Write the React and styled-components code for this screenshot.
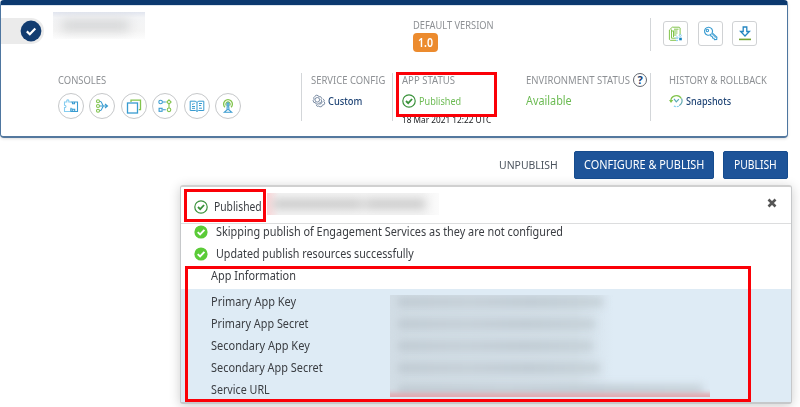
import React, { useLayoutEffect, useRef, useState } from "react";
import styled, { createGlobalStyle } from "styled-components";

const Global = createGlobalStyle`
  * { box-sizing: border-box; }
  body { margin: 0; background: #fff; overflow: hidden; font-family: "Noto Sans", "Open Sans", sans-serif; }
`;

/* Text set to a fixed measure, standing in for a condensed humanist face. */
const Measure = styled.span`
  display: block;
  flex: none;
  width: ${(p) => p.$w}px;
  height: ${(p) => p.$h}px;
  line-height: ${(p) => p.$h}px;
  font-size: ${(p) => p.$size}px;
  font-weight: ${(p) => p.$weight};
  color: ${(p) => p.$color};
  white-space: nowrap;
`;
const Glyphs = styled.span`
  display: inline-block;
  transform-origin: 0 50%;
`;
function Text({ w, h = 16, size = 12, weight = 400, color = "#3a3d42", children }) {
  const ref = useRef(null);
  const [scale, setScale] = useState(1);
  useLayoutEffect(() => {
    setScale(w / ref.current.offsetWidth);
  }, [w, size]);
  return (
    <Measure $w={w} $h={h} $size={size} $weight={weight} $color={color}>
      <Glyphs ref={ref} style={{ transform: `scaleX(${scale})` }}>{children}</Glyphs>
    </Measure>
  );
}
const Label = ({ w, children }) => <Text w={w} size={11} color="#8d9094">{children}</Text>;

const Page = styled.main`
  position: relative;
  width: 800px;
  height: 407px;
  overflow: hidden;
`;
const Card = styled.section`
  width: 788px;
  height: 138px;
  border: 1px solid #4e76a0;
  border-top: 5px solid #0b396f;
  border-bottom: 2px solid #54789e;
  border-radius: 4px;
  box-shadow: 0 1px 3px #0002, inset 0 1px 0 #dbe4ed;
`;
const Summary = styled.div`
  display: flex;
  height: 68px;
`;
const Toggle = styled.div`
  display: flex;
  align-items: center;
  justify-content: flex-end;
  width: 43px;
  height: 26px;
  margin-top: 13px;
  padding-right: 2px;
  border-radius: 0 13px 13px 0;
  background: #ebebeb;
`;
const AppName = styled.div`
  position: relative;
  width: 92px;
  height: 27px;
  margin: 7px 0 0 9px;
  overflow: hidden;
  background: linear-gradient(#e1e5ef, #f3f4f6 20%, #f5f5f5 70%, #fdfdfd);
  &::after {
    content: "";
    position: absolute;
    inset: 9px 16px 9px 9px;
    background: #cbcccd;
    filter: blur(6px);
  }
`;
const Version = styled.div`
  width: 237px;
  margin: 12px 0 0 268px;
`;
const VersionBadge = styled.div`
  display: flex;
  justify-content: center;
  align-items: center;
  width: 25px;
  height: 19px;
  border-radius: 4px;
  background: #ec8b2e;
`;
const Actions = styled.div`
  display: flex;
  gap: 9.5px;
  height: 33px;
  margin-top: 13px;
  padding: 3px 0 0 12px;
  border-left: 1px solid #d3d6d9;
`;
const ActionButton = styled.button`
  display: grid;
  place-items: center;
  width: 25px;
  height: 25px;
  padding: 0;
  border: 1px solid #d0d2d4;
  border-radius: 3px;
  background: #fff;
`;
const Details = styled.div`
  display: grid;
  grid-template-columns: 300px 91px 124px 134px 1fr;
  grid-template-rows: 48px;
  height: 48px;
`;
const Column = styled.div`
  padding-left: ${(p) => p.$pad}px;
  border-left: ${(p) => (p.$line ? "1px solid #d3d6d9" : "0")};
`;
const Heading = styled.div`
  display: flex;
  align-items: center;
  gap: 3px;
  height: 14px;
`;
const Value = styled.div`
  display: flex;
  align-items: center;
  gap: ${(p) => p.$gap || 2}px;
  height: 16px;
  margin-top: 6px;
`;
const Timestamp = styled.div`
  height: 14px;
  margin-top: 4px;
`;
const Consoles = styled.div`
  display: flex;
  gap: 5.4px;
  margin-top: 6px;
`;
const ConsoleButton = styled.button`
  display: grid;
  flex: none;
  place-items: center;
  width: 26px;
  height: 26px;
  padding: 0;
  border: 1px solid #c6c8ca;
  border-radius: 50%;
  background: #fff;
`;
const Toolbar = styled.div`
  display: flex;
  align-items: center;
  justify-content: flex-end;
  width: 788px;
  height: 27px;
  margin-top: 13px;
`;
const PublishButton = styled.button`
  display: flex;
  align-items: center;
  justify-content: center;
  width: ${(p) => p.$w}px;
  height: 28px;
  margin-left: ${(p) => p.$gap}px;
  padding: 0;
  border: 1px solid #164c8e;
  border-radius: 2px;
  background: #1e5499;
  font-family: inherit;
`;
const Panel = styled.section`
  width: 612px;
  height: 219px;
  margin: 7px 0 0 180px;
  border: 1px solid #c6c8ca;
  border-top: 2px solid #d0d0d0;
  border-bottom-width: 2px;
  border-radius: 3px;
  background: #fff;
  box-shadow: 0 2px 12px #0003;
`;
const PanelHeader = styled.header`
  display: flex;
  height: 37px;
  padding-left: 13px;
  border-bottom: 1px solid #dcddde;
`;
const PanelTitle = styled.div`
  display: flex;
  align-items: center;
  gap: 6px;
  height: 20px;
  margin-top: 10px;
`;
const RedactedTitle = styled.div`
  position: relative;
  width: 172px;
  height: 22px;
  margin: 6px 0 0 5px;
  overflow: hidden;
  background: linear-gradient(90deg, #fbd5d7, #f3f3f3 7%, #f4f4f4 90%, #fbfbfb);
  &::after {
    content: "";
    position: absolute;
    inset: 7px 14px 7px 6px;
    background: linear-gradient(90deg, #c2c2c2 55%, #d6d6d6 59%, #c2c2c2 65%);
    filter: blur(5px);
  }
`;
const CloseButton = styled.button`
  width: 12px;
  height: 12px;
  margin: 10px 13px 0 auto;
  padding: 0;
  border: 0;
  background: none;
  line-height: 0;
`;
const Message = styled.div`
  display: flex;
  align-items: center;
  gap: 8px;
  height: 22px;
  padding-left: 13px;
  transform: translateY(-3px);
`;
const SectionTitle = styled.div`
  height: 21px;
  padding-left: 29.5px;
`;
const Info = styled.div`
  display: grid;
  grid-template-columns: 182px 320px;
  height: 113px;
  padding: 6px 0 0 29.5px;
  background: #deebf5;
`;
const Keys = styled.div`
  display: grid;
  grid-auto-rows: 21.9px;
  line-height: 0;
`;
const HiddenValues = styled.div`
  position: relative;
  display: flex;
  flex-direction: column;
  gap: 12px;
  width: 320px;
  height: 102px;
  padding: 2px 0 0 8px;
  margin-left: -3px;
  overflow: hidden;
  background: linear-gradient(90deg, #d2dde5, #d4e0e8 58%, #deebf5 70%);
  &::after {
    content: "";
    position: absolute;
    inset: 98px -10px -6px -8px;
    background: #e2a9b0;
    filter: blur(2px);
  }
`;
const HiddenValue = styled.div`
  flex: none;
  width: ${(p) => p.$w}px;
  height: 10px;
  background: linear-gradient(90deg, #bec9d1, #c4ced6 35%, #bec9d1 65%, #c5d0d7);
  filter: blur(4.5px);
`;
const Highlight = styled.div`
  position: absolute;
  left: ${(p) => p.$x}px;
  top: ${(p) => p.$y}px;
  width: ${(p) => p.$w}px;
  height: ${(p) => p.$h}px;
  border: ${(p) => p.$t || 3}px solid #fb0007;
  pointer-events: none;
`;
const Svg = styled.svg`
  display: block;
  flex: none;
  fill: none;
  stroke: ${(p) => p.$c || "#389bd0"};
  stroke-width: ${(p) => p.$sw || 1.1};
`;

const B = "#389bd0";
const G = "#82c44c";

const Done = () => (
  <Svg width="22" height="22" viewBox="0 0 22 22" $c="#fff">
    <circle cx="11" cy="11" r="10.4" fill="#123c70" stroke="none" />
    <path d="M6.8 11.4l3 2.8 5.5-5.6" strokeWidth="2.2" />
  </Svg>
);
const CheckRing = () => (
  <Svg width="14" height="14" viewBox="0 0 14 14" $c="#39913a">
    <circle cx="7" cy="7" r="6.2" strokeWidth="1.2" />
    <path d="M4 7l2.2 2.2L10.1 5" strokeWidth="1.8" />
  </Svg>
);
const CheckSolid = () => (
  <Svg width="14" height="14" viewBox="0 0 14 14" $c="#fff">
    <circle cx="7" cy="7" r="6.6" fill="#5bcb38" stroke="none" />
    <path d="M3.7 7.1l2.4 2.3 4.3-4.5" strokeWidth="1.9" />
  </Svg>
);
const Gear = () => (
  <Svg width="15" height="15" viewBox="0 0 15 15" $c="#6e819b" $sw="0.9">
    <path d="M5.2 1.2l2 .4.7 1.2 1.8-.1 1.1 1.7-.8 1.3.7 1.3-.9 1.8-1.5.1-1 1.3-2.1-.2-.7-1.3-1.7-.3-.7-1.9 1-1.2-.4-1.6 1.2-1.4z" />
    <circle cx="6.3" cy="5.8" r="2.3" />
    <path d="M12 5l1.3 1.1-.4 1.6 1 1.3-.8 1.7-1.6.2-.7 1.6-1.9.4-1-.9-1.6.4-1.2-1.5" />
    <path d="M8.2 10.2l2-.5 1.2-2" />
  </Svg>
);
const Help = styled.span`
  display: grid;
  place-items: center;
  width: 14px;
  height: 14px;
  border: 1px solid #62676f;
  border-radius: 50%;
  color: #173f72;
  font-size: 11px;
  font-weight: 700;
  line-height: 12px;
`;
const History = () => (
  <Svg width="14" height="14" viewBox="0 0 14 14" $c={G} $sw="1.2">
    <path d="M1.8 7.5a5.6 5.6 0 0 1 10.5-3" />
    <path d="M0 6.1h4.3L2 8.9z" fill={G} stroke="none" />
    <path d="M12.5 4.5c1.5 3-.2 6-2.3 7" stroke="#65a9b2" />
    <path d="M9.8 12.2c-2 .8-4 .5-5.3-.4" stroke="#81cdef" strokeDasharray="2 1" />
    <path d="M5 4.8l2.3 3 2.6-2.6" stroke="#58aab5" />
  </Svg>
);
const Puzzle = () => (
  <Svg width="16" height="14" viewBox="0 0 16 14" $c="#86cdf0">
    <path d="M7.5 3H5.8V1.5C5.5.6 4.1.6 3.8 1.5V3H1.5v3.2c2 0 2 2.4 0 2.4v3.9h6.2v-2c.3-1 1.7-1 2 0" />
    <path d="M7.5 3h7v9.5H8V8.8M9.5 3.2v1.6h2V3.2M9.7 12.3v-2h2v2" stroke={B} />
  </Svg>
);
const Merge = () => (
  <Svg width="14" height="14" viewBox="0 0 14 14" $c={G}>
    <circle cx="3" cy="2.3" r="1.5" /><circle cx="3" cy="7" r="1.5" /><circle cx="3" cy="11.7" r="1.5" />
    <path d="M4.8 7H12M10 5l2.5 2L10 9" stroke={B} />
    <path d="M4.8 2.3c3 0 1.6 3.7 3.7 4.3M4.8 11.7c3 0 1.6-3.7 3.7-4.3" stroke={B} />
  </Svg>
);
const Layers = () => (
  <Svg width="16" height="15" viewBox="0 0 16 15">
    <rect x="1.5" y="4" width="10" height="10" strokeWidth="1.3" />
    <path d="M5 2.9V1.2h9.5v9.5h-1.7" stroke={G} strokeWidth="1.3" />
  </Svg>
);
const Flow = () => (
  <Svg width="14" height="14" viewBox="0 0 14 14">
    <circle cx="2.6" cy="3" r="1.8" />
    <rect x="1.1" y="9.3" width="3" height="3" />
    <path d="M4.8 3h3M4.8 10.8h3" />
    <path d="M11 .8L13.1 3 11 5.2 8.8 3z" stroke={G} />
    <circle cx="11" cy="10.8" r="1.8" stroke={G} />
    <path d="M11 5.4V9" stroke={G} />
  </Svg>
);
const Book = () => (
  <Svg width="16" height="14" viewBox="0 0 16 14" $sw="1">
    <path d="M1.2 2.2h5L8 3.4l1.8-1.2h5v9.3H9.5L8 12.4l-1.5-.9H1.2zM8 3.5v8.8" />
    <path d="M3 4.8l1 .8 1.6-1.7M3 7.5h3M3 9.3h3M10 4.5h3M10 6.5h2.2M10 9.2h3" />
  </Svg>
);
const Antenna = () => (
  <Svg width="14" height="15" viewBox="0 0 14 15" $c={G}>
    <path d="M4 8.3a4.4 4.4 0 1 1 6 0" strokeWidth="1.3" />
    <path d="M5.5 6.7a2.2 2.2 0 1 1 3 0" />
    <circle cx="7" cy="5" r="1.1" stroke={B} />
    <path d="M6.3 6.3L6 10.8l-2.7 2.5h7.4L8 10.8l-.4-4.5M6 10.8h2" stroke={B} />
  </Svg>
);
const Copies = () => (
  <Svg width="15" height="16" viewBox="0 0 15 16" $c={G} $sw="1">
    <path d="M4.3 1.2h7l.8.8v7M6 3.2h4.5M4.3 1.2L1.4 4v9.5l1 .8h5.8M3.5 3.5v8.7h4.3M3.5 5h6M5.5 7h4M5.5 9h3M5.5 5v6" />
    <circle cx="9" cy="11.8" r="1" stroke="#8bcff0" /><circle cx="12.3" cy="9.5" r="1" stroke="#8bcff0" />
    <rect x="11.2" y="11.7" width="2.6" height="2.6" fill="#1583bf" stroke="none" />
    <path d="M8 14.6h2" stroke="#8bcff0" />
  </Svg>
);
const KeyIcon = () => (
  <Svg width="15" height="15" viewBox="0 0 15 15">
    <path d="M7.8 8.5a4 4 0 1 1 1.4-1.7l4.7 4.5-.2 2.2-2.2.1-.6-1.4-1.3-.1-.2-1.3-1.6-.8z" />
    <circle cx="4.4" cy="4.5" r="1.2" />
    <path d="M8 7.2l4.7 4.7" strokeWidth="0.8" />
  </Svg>
);
const Download = () => (
  <Svg width="14" height="15" viewBox="0 0 14 15" $c="#2586c2">
    <path d="M5.2 1h3.6v4.5h2.6L7 10 2.6 5.5h2.6z" strokeWidth="1.3" />
    <path d="M1 13.4h12" stroke="#73a333" strokeWidth="1.6" />
  </Svg>
);

const consoleIcons = [Puzzle, Merge, Layers, Flow, Book, Antenna];
const actionIcons = [Copies, KeyIcon, Download];
const keys = [
  ["Primary App Key", 85],
  ["Primary App Secret", 97.5],
  ["Secondary App Key", 99],
  ["Secondary App Secret", 112],
  ["Service URL", 59],
];

export default function App() {
  return (
    <Page>
      <Global />
      <Card>
        <Summary>
          <Toggle><Done /></Toggle>
          <AppName />
          <Version>
            <Label w={81}>DEFAULT VERSION</Label>
            <VersionBadge><Text w={15} size={12} weight={600} color="#fff">1.0</Text></VersionBadge>
          </Version>
          <Actions>
            {actionIcons.map((Icon, i) => <ActionButton key={i}><Icon /></ActionButton>)}
          </Actions>
        </Summary>
        <Details>
          <Column $pad={57}>
            <Heading><Label w={48}>CONSOLES</Label></Heading>
            <Consoles>
              {consoleIcons.map((Icon, i) => <ConsoleButton key={i}><Icon /></ConsoleButton>)}
            </Consoles>
          </Column>
          <Column $pad={9} $line>
            <Heading><Label w={74}>SERVICE CONFIG</Label></Heading>
            <Value $gap={2}><Gear /><Text w={34} size={11.5} weight={500} color="#1f4475">Custom</Text></Value>
          </Column>
          <Column $pad={9} $line>
            <Heading><Label w={53}>APP STATUS</Label></Heading>
            <Value $gap={3}><CheckRing /><Text w={42} size={11.5} color="#6cbb53">Published</Text></Value>
            <Timestamp><Text w={89} h={13} size={9} color="#17191c">18 Mar 2021 12:22 UTC</Text></Timestamp>
          </Column>
          <Column $pad={10}>
            <Heading><Label w={104}>ENVIRONMENT STATUS</Label><Help>?</Help></Heading>
            <Value><Text w={46} color="#6cbb53">Available</Text></Value>
          </Column>
          <Column $pad={18} $line>
            <Heading><Label w={98}>HISTORY &amp; ROLLBACK</Label></Heading>
            <Value $gap={3}><History /><Text w={45} size={11.5} weight={500} color="#1f4475">Snapshots</Text></Value>
          </Column>
        </Details>
      </Card>
      <Toolbar>
        <Text w={59} size={11.5} color="#4c545e">UNPUBLISH</Text>
        <PublishButton $w={140} $gap={16}><Text w={120} size={12} color="#fff">CONFIGURE &amp; PUBLISH</Text></PublishButton>
        <PublishButton $w={65} $gap={9}><Text w={43} size={12} color="#fff">PUBLISH</Text></PublishButton>
      </Toolbar>
      <Panel>
        <PanelHeader>
          <PanelTitle><CheckRing /><Text w={48}>Published</Text></PanelTitle>
          <RedactedTitle />
          <CloseButton aria-label="Close">
            <Svg width="12" height="12" viewBox="0 0 12 12" $c="#555" $sw="2.6"><path d="M2.5 2.5l7 7M9.5 2.5l-7 7" /></Svg>
          </CloseButton>
        </PanelHeader>
        <Message><CheckSolid /><Text w={347}>Skipping publish of Engagement Services as they are not configured</Text></Message>
        <Message><CheckSolid /><Text w={197.5}>Updated publish resources successfully</Text></Message>
        <SectionTitle><Text w={84.5}>App Information</Text></SectionTitle>
        <Info>
          <Keys>{keys.map(([name, w]) => <Text key={name} w={w} h={13}>{name}</Text>)}</Keys>
          <HiddenValues>
            {[205, 197, 195, 202, 305].map((w, i) => <HiddenValue key={i} $w={w} />)}
          </HiddenValues>
        </Info>
      </Panel>
      <Highlight $x={396} $y={72} $w={101} $h={45} />
      <Highlight $x={184} $y={189} $w={82} $h={33} />
      <Highlight $x={185} $y={266} $w={566} $h={136} />
    </Page>
  );
}
